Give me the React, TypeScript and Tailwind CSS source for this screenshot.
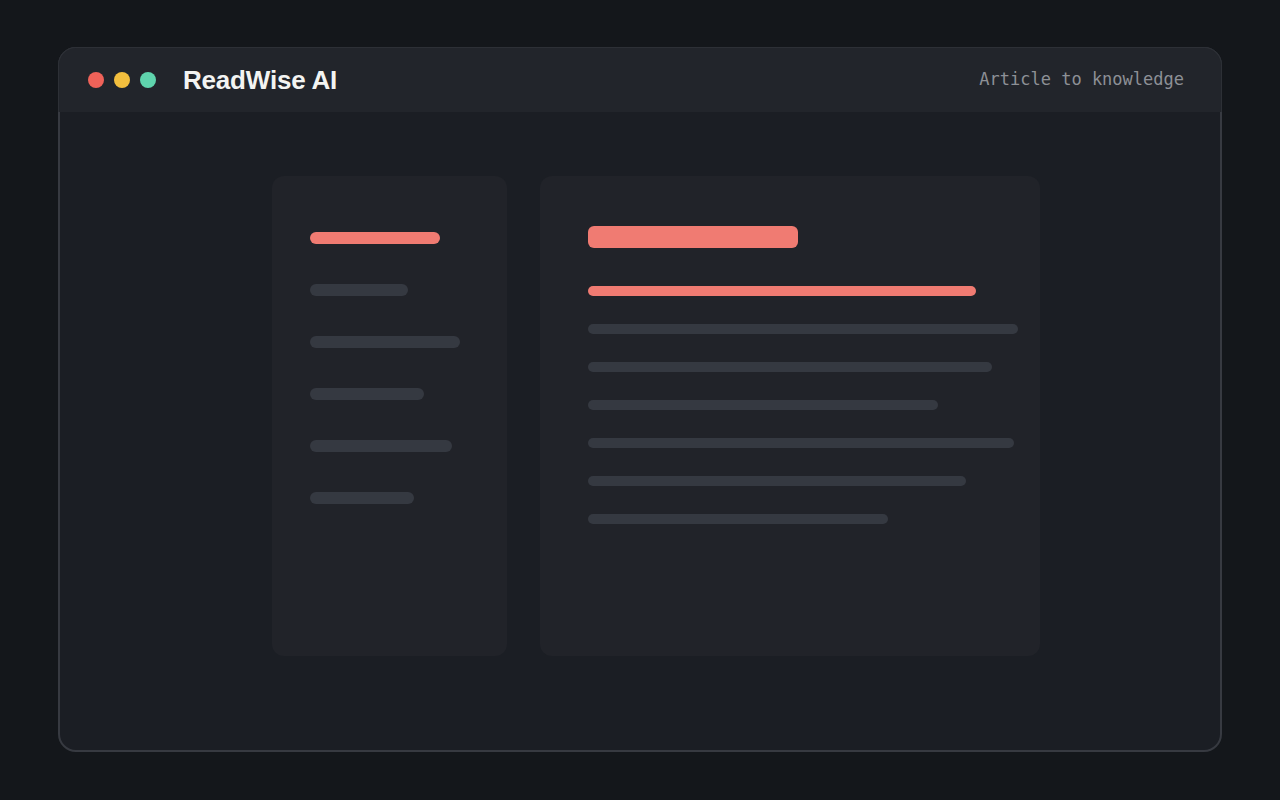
export default function App() {
  const sideLines = [98, 150, 114, 142, 104]
  const bodyLines = [430, 404, 350, 426, 378, 300]

  return (
    <div className="w-full h-[800px] bg-[#14171b] px-[58px] pt-[47px] pb-[48px]">
      <div className="h-full rounded-[18px] border-2 border-[#373a41] bg-[#1b1e24] flex flex-col">
        {/* 헤더 */}
        <div className="-mx-[2px] -mt-[2px] h-[65px] shrink-0 rounded-t-[18px] border border-b-0 border-[#2d3036] bg-[#22252b] flex items-center pl-[29px] pr-[37px]">
          <div className="flex items-center gap-[10px]">
            <span className="w-4 h-4 rounded-full bg-[#ef6259]" />
            <span className="w-4 h-4 rounded-full bg-[#f3bf3e]" />
            <span className="w-4 h-4 rounded-full bg-[#5fd4ad]" />
          </div>
          <h1 className="ml-[27px] text-[26px] font-bold text-[#f3f4f2] tracking-[-0.2px] font-['Liberation_Sans',Arial,sans-serif]">
            ReadWise AI
          </h1>
          <span className="ml-auto text-[17px] text-[#8d9096] font-['DejaVu_Sans_Mono',monospace]">
            Article to knowledge
          </span>
        </div>

        {/* 본문 */}
        <div className="flex-1 flex pl-[212px] pt-[64px] gap-[33px]">
          <div className="w-[235px] h-[480px] rounded-[12px] bg-[#212329] pt-[56px] pl-[38px] flex flex-col gap-[40px]">
            <div className="w-[130px] h-[12px] rounded-full bg-[#f07b72]" />
            {sideLines.map((w, i) => (
              <div key={i} className="h-[12px] rounded-full bg-[#353941]" style={{ width: w }} />
            ))}
          </div>

          <div className="w-[500px] h-[480px] rounded-[12px] bg-[#212329] pt-[50px] pl-[48px] flex flex-col">
            <div className="w-[210px] h-[22px] rounded-[6px] bg-[#f07b72]" />
            <div className="mt-[38px] w-[388px] h-[10px] rounded-full bg-[#f07b72]" />
            <div className="mt-[28px] flex flex-col gap-[28px]">
              {bodyLines.map((w, i) => (
                <div key={i} className="h-[10px] rounded-full bg-[#353941]" style={{ width: w }} />
              ))}
            </div>
          </div>
        </div>
      </div>
    </div>
  )
}
